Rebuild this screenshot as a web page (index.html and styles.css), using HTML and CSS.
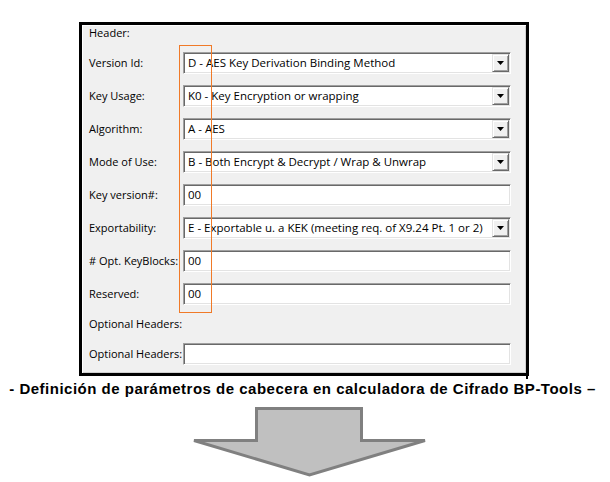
FILE: index.html
```html
<!DOCTYPE html>
<html lang="es">
<head>
<meta charset="utf-8">
<title>Cabecera TR-31</title>
<link rel="stylesheet" href="styles.css">
</head>
<body>
<div class="page">
  <div class="panel">
    <div class="heading">Header:</div>

    <div class="row">
      <span class="lbl">Version Id:</span>
      <div class="combo"><span class="val">D - AES Key Derivation Binding Method</span><span class="drop"><svg width="7" height="4" viewBox="0 0 7 4"><polygon points="0,0 7,0 3.5,4" fill="#000"/></svg></span></div>
    </div>
    <div class="row">
      <span class="lbl">Key Usage:</span>
      <div class="combo"><span class="val">K0 - Key Encryption or wrapping</span><span class="drop"><svg width="7" height="4" viewBox="0 0 7 4"><polygon points="0,0 7,0 3.5,4" fill="#000"/></svg></span></div>
    </div>
    <div class="row">
      <span class="lbl">Algorithm:</span>
      <div class="combo"><span class="val">A - AES</span><span class="drop"><svg width="7" height="4" viewBox="0 0 7 4"><polygon points="0,0 7,0 3.5,4" fill="#000"/></svg></span></div>
    </div>
    <div class="row">
      <span class="lbl">Mode of Use:</span>
      <div class="combo"><span class="val">B - Both Encrypt &amp; Decrypt / Wrap &amp; Unwrap</span><span class="drop"><svg width="7" height="4" viewBox="0 0 7 4"><polygon points="0,0 7,0 3.5,4" fill="#000"/></svg></span></div>
    </div>
    <div class="row">
      <span class="lbl">Key version#:</span>
      <div class="edit"><span class="val">00</span></div>
    </div>
    <div class="row">
      <span class="lbl">Exportability:</span>
      <div class="combo"><span class="val">E - Exportable u. a KEK (meeting req. of X9.24 Pt. 1 or 2)</span><span class="drop"><svg width="7" height="4" viewBox="0 0 7 4"><polygon points="0,0 7,0 3.5,4" fill="#000"/></svg></span></div>
    </div>
    <div class="row">
      <span class="lbl"># Opt. KeyBlocks:</span>
      <div class="edit"><span class="val">00</span></div>
    </div>
    <div class="row">
      <span class="lbl">Reserved:</span>
      <div class="edit"><span class="val">00</span></div>
    </div>

    <div class="heading">Optional Headers:</div>
    <div class="row">
      <span class="lbl">Optional Headers:</span>
      <div class="edit"></div>
    </div>

    <div class="mark"></div>
  </div>

  <p class="caption">- Definición de parámetros de cabecera en calculadora de Cifrado BP-Tools –</p>

  <svg class="arrow" width="240" height="74" viewBox="190 404 240 74">
    <polygon points="256.5,407.5 361.5,407.5 361.5,439.5 425,439.5 309.5,474 194,439.5 256.5,439.5" fill="#c0c0c0" stroke="#808080" stroke-width="3"/>
  </svg>
</div>
</body>
</html>
```
FILE: styles.css
```css
html, body {
  margin: 0;
  padding: 0;
  background: #fff;
}

.page {
  width: 610px;
  height: 482px;
  overflow: hidden;
}

/* dialog panel with a heavy black frame */
.panel {
  position: relative;
  box-sizing: border-box;
  width: 450px;
  margin: 22px 0 0 79px;
  border: 3px solid #000;
  background: #f0f0f0;
  box-shadow: inset 1px 1px 0 #fff, inset -1px -1px 0 #d0d0d0;
  padding: 0 15px 8px 7px;
  display: flex;
  flex-direction: column;
  gap: 11px;
  font-family: "Open Sans", "Noto Sans", sans-serif;
  font-size: 11px;
  color: #000;
}

.panel::after {
  content: "";
  position: absolute;
  right: -2px;
  bottom: -6px;
  width: 2px;
  height: 6px;
  background: #000;
}

.heading {
  height: 16px;
  line-height: 16px;
  white-space: nowrap;
}

.row {
  display: grid;
  grid-template-columns: 94px 328px;
  align-items: center;
  height: 22px;
}

.lbl {
  white-space: nowrap;
  line-height: 16px;
}

/* sunken 3D box shared by combos and edits */
.combo, .edit {
  position: relative;
  z-index: 1;
  box-sizing: border-box;
  height: 22px;
  background: #fff;
  border: 1px solid;
  border-color: #a0a0a0 #fff #fff #a0a0a0;
  box-shadow: inset 1px 1px 0 #696969, inset -1px -1px 0 #e3e3e3;
  display: flex;
  align-items: center;
  padding: 1px;
}

.val {
  flex: 1;
  padding-left: 3px;
  white-space: nowrap;
  overflow: hidden;
  font-size: 11.5px;
  line-height: 18px;
}

.drop {
  box-sizing: border-box;
  width: 17px;
  height: 18px;
  background: #f0f0f0;
  border: 1px solid;
  border-color: #e3e3e3 #696969 #696969 #e3e3e3;
  box-shadow: inset 1px 1px 0 #fff, inset -1px -1px 0 #a0a0a0;
  display: flex;
  align-items: center;
  justify-content: center;
}

.drop svg {
  display: block;
}

/* highlight rectangle drawn over the first field column */
.mark {
  position: absolute;
  left: 97px;
  top: 20px;
  width: 31px;
  height: 266px;
  border: 1px solid #f07a28;
  z-index: 2;
  pointer-events: none;
}

.caption {
  margin: 5px 0 0;
  padding-right: 5px;
  font-family: "Liberation Sans", Arial, sans-serif;
  font-weight: bold;
  font-size: 15px;
  letter-spacing: 0.5px;
  line-height: 16px;
  text-align: center;
  white-space: nowrap;
  color: #000;
}

.arrow {
  display: block;
  margin: 8px 0 0 190px;
}
```
